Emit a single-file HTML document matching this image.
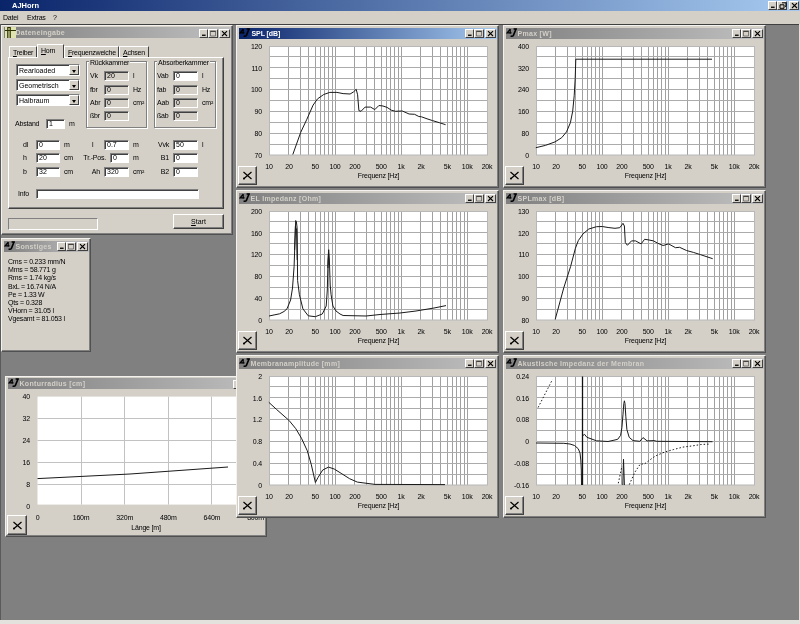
<!DOCTYPE html><html><head><meta charset="utf-8"><style>
*{box-sizing:border-box}
html,body{margin:0;padding:0}
body{width:800px;height:624px;overflow:hidden;background:#808080;position:relative;will-change:transform;font-family:"Liberation Sans",sans-serif;font-size:7px;color:#000}
div,span,svg{position:absolute}
.apptb{left:0;top:0;width:800px;height:11px;background:linear-gradient(90deg,#0a246a,#a6caf0)}
.apptb .t{left:12px;top:1px;color:#fff;font-weight:bold;font-size:7.5px;line-height:9px}
.menu{left:0;top:11px;width:800px;height:13px;background:#d4d0c8}
.menu span{top:2px;line-height:9px;font-size:7px;letter-spacing:-0.2px}
.mdi{left:0;top:24px;width:800px;height:1px;background:#404040}
.win{background:#d4d0c8;border-top:1px solid #f4f2ee;border-left:1px solid #f4f2ee;border-right:1px solid #505050;border-bottom:1px solid #505050;box-shadow:inset -1px -1px 0 #808080}
.tb{left:1.5px;top:2px;height:11px;background:linear-gradient(90deg,#808080,#c0c0c0)}
.tb.act{background:linear-gradient(90deg,#0a246a,#a6caf0)}
.tb .tt{left:12px;top:1px;line-height:9px;font-weight:bold;font-size:7px;color:#d4d0c8;white-space:nowrap;letter-spacing:0.3px}
.tb.act .tt{color:#fff;letter-spacing:-0.1px;left:13px}
.ic{left:1px;top:1px;width:10px;height:9px}

.tbtn{top:3px;width:9px;height:9px;background:#d4d0c8;border-top:1px solid #fff;border-left:1px solid #fff;border-right:1px solid #404040;border-bottom:1px solid #404040}
.tbtn i{position:absolute;display:block}
.tbtn .mn{left:2px;top:4px;width:4px;height:1px;background:#000}
.tbtn .mx{left:1px;top:0px;width:6px;height:5px;border:1px solid #000;border-top-width:1px}
.tbtn .cl{left:1px;top:-1px;font-style:normal;font-size:7px;line-height:7px;font-weight:bold}
.sv{left:-1px;top:-1px}
.lb{font-size:7px;letter-spacing:-0.2px;fill:#000;font-family:"Liberation Sans",sans-serif}
.xbtn{width:19px;height:19px;background:#d4d0c8;border-top:1px solid #fff;border-left:1px solid #fff;border-right:1px solid #404040;border-bottom:1px solid #404040;box-shadow:inset -1px -1px 0 #808080}
.xbtn span{left:4px;top:3px;font-size:10px;line-height:10px;font-weight:bold}

.tx{line-height:9px;font-size:7px;letter-spacing:-0.2px;white-space:nowrap}
.fld{border-top:1px solid #808080;border-left:1px solid #808080;border-right:1px solid #fff;border-bottom:1px solid #fff;box-shadow:inset 1px 1px 0 #404040}
.fld span{left:2px;top:0;line-height:8px;font-size:7px}
.tabpage{border-top:1px solid #fff;border-left:1px solid #fff;border-right:1px solid #404040;border-bottom:1px solid #404040;box-shadow:inset -1px -1px 0 #808080}
.tab{background:#d4d0c8;border-top:1px solid #fff;border-left:1px solid #fff;border-right:1px solid #404040}
.tab.sel{z-index:2;border-bottom:none}
.tab span{left:3px;top:0.5px;line-height:9px;font-size:7px;letter-spacing:-0.25px;white-space:nowrap}
.combo{background:#fff;border-top:1px solid #808080;border-left:1px solid #808080;border-right:1px solid #fff;border-bottom:1px solid #fff;box-shadow:inset 1px 1px 0 #404040}
.combo span{left:2px;top:1px;line-height:9px;font-size:7px}
.cbtn{right:0px;top:0px;width:10px;height:10px;background:#d4d0c8;border-top:1px solid #fff;border-left:1px solid #fff;border-right:1px solid #404040;border-bottom:1px solid #404040}
.cbtn i{position:absolute;left:2px;top:3.5px;width:0;height:0;border-left:2.5px solid transparent;border-right:2.5px solid transparent;border-top:3px solid #000}
.grp{border:1px solid #808080;box-shadow:1px 1px 0 #fff, inset 1px 1px 0 #fff}
.prog{border-top:1px solid #808080;border-left:1px solid #808080;border-right:1px solid #fff;border-bottom:1px solid #fff}
.btn{background:#d4d0c8;border-top:1px solid #fff;border-left:1px solid #fff;border-right:1px solid #404040;border-bottom:1px solid #404040;box-shadow:inset -1px -1px 0 #808080}
.btn span{left:0;width:100%;text-align:center;top:2px;line-height:9px;font-size:7px}

</style></head><body>
<div class="apptb"><span class="t">AJHorn</span></div>
<div class="menu"><span style="left:3px">Datei</span><span style="left:27px">Extras</span><span style="left:53px">?</span></div>
<div class="mdi"></div>
<div style="left:0;top:24px;width:1px;height:596px;background:#5a5a5a"></div>
<div class="tbtn" style="left:768px;top:1px;width:9px;height:9px"><svg style="left:0px;top:0px" width="8" height="7" viewBox="0 0 8 7"><rect x="2" y="4.6" width="3.6" height="1.3" fill="#000"/></svg></div>
<div class="tbtn" style="left:777px;top:1px;width:10px;height:9px"><svg style="left:1px;top:0px" width="8" height="7" viewBox="0 0 8 7"><path d="M3 0.8H7V4.3H6M1 2.8H5V6.3H1Z" stroke="#000" stroke-width="1" fill="none"/></svg></div>
<div class="tbtn" style="left:789px;top:1px;width:10px;height:9px"><svg style="left:0px;top:0px" width="9" height="7" viewBox="0 0 9 7"><path d="M2 1.2L7 6M7 1.2L2 6" stroke="#000" stroke-width="1.1" fill="none"/></svg></div>
<div style="left:0;top:620px;width:800px;height:4px;background:#e4e2dc"></div>
<div style="left:799px;top:24px;width:1px;height:600px;background:#e4e2dc"></div>
<div class="win" style="left:1px;top:25px;width:232px;height:210px;">
<div class="tb" style="width:227px;top:1px"><span class="ic ic-grid"><svg style="left:-1px;top:-1px" width="13" height="11" viewBox="0 0 13 11"><rect x="1" y="0" width="11" height="11" fill="#dfe3b0"/><path d="M1 3.5H12M3.5 0.5H6.8M3.8 0V11M6.2 0V11" stroke="#2a3000" stroke-width="1.2" fill="none"/></svg></span><span class="tt">Dateneingabe</span></div>
<div class="tbtn" style="left:197px;width:9px"><svg style="left:0px;top:0px" width="8" height="7" viewBox="0 0 8 7"><rect x="2" y="4.6" width="3.6" height="1.3" fill="#000"/></svg></div>
<div class="tbtn" style="left:206px;width:10px"><svg style="left:0px;top:0px" width="8" height="7" viewBox="0 0 8 7"><path d="M1.5 1.5H6.5V6H1.5Z" stroke="#555" stroke-width="0.7" fill="none"/><path d="M1.2 1.2H6.8" stroke="#222" stroke-width="0.9"/></svg></div>
<div class="tbtn" style="left:217px;width:11px"><svg style="left:0px;top:0px" width="9" height="7" viewBox="0 0 9 7"><path d="M2 1.2L7 6M7 1.2L2 6" stroke="#000" stroke-width="1.1" fill="none"/></svg></div>
<div class="tabpage" style="left:6px;top:31px;width:216px;height:152px"></div>
<div class="tab" style="left:7px;top:20px;width:28px;height:11px"><span><u>T</u>reiber</span></div>
<div class="tab sel" style="left:35px;top:18px;width:27px;height:14px"><span><u>H</u>orn</span></div>
<div class="tab" style="left:62px;top:20px;width:55px;height:11px"><span><u>F</u>requenzweiche</span></div>
<div class="tab" style="left:117px;top:20px;width:30px;height:11px"><span><u>A</u>chsen</span></div>
<div class="combo" style="left:14px;top:38px;width:64px;height:12px"><span>Rearloaded</span><div class="cbtn"><i></i></div></div>
<div class="combo" style="left:14px;top:53px;width:64px;height:12px"><span>Geometrisch</span><div class="cbtn"><i></i></div></div>
<div class="combo" style="left:14px;top:68px;width:64px;height:12px"><span>Halbraum</span><div class="cbtn"><i></i></div></div>
<div class="grp" style="left:84px;top:35px;width:61px;height:67px"></div>
<span class="tx" style="left:87px;top:32px;background:#d4d0c8;padding:0 1px">R&uuml;ckkammer</span>
<div class="grp" style="left:152px;top:35px;width:62px;height:67px"></div>
<span class="tx" style="left:155px;top:32px;background:#d4d0c8;padding:0 1px">Absorberkammer</span>
<span class="tx" style="left:88px;top:45px;">Vk</span>
<div class="fld" style="left:102px;top:45px;width:25px;height:10px;background:#d4d0c8"><span>20</span></div>
<span class="tx" style="left:131px;top:45px;">l</span>
<span class="tx" style="left:88px;top:59px;">fbr</span>
<div class="fld" style="left:102px;top:59px;width:25px;height:10px;background:#d4d0c8"><span>0</span></div>
<span class="tx" style="left:131px;top:59px;">Hz</span>
<span class="tx" style="left:88px;top:72px;">Abr</span>
<div class="fld" style="left:102px;top:72px;width:25px;height:10px;background:#d4d0c8"><span>0</span></div>
<span class="tx" style="left:131px;top:72px;">cm&sup2;</span>
<span class="tx" style="left:88px;top:85px;">&szlig;br</span>
<div class="fld" style="left:102px;top:85px;width:25px;height:10px;background:#d4d0c8"><span>0</span></div>
<span class="tx" style="left:131px;top:85px;"></span>
<span class="tx" style="left:155px;top:45px;">Vab</span>
<div class="fld" style="left:171px;top:45px;width:25px;height:10px;background:#fff"><span>0</span></div>
<span class="tx" style="left:200px;top:45px;">l</span>
<span class="tx" style="left:155px;top:59px;">fab</span>
<div class="fld" style="left:171px;top:59px;width:25px;height:10px;background:#d4d0c8"><span>0</span></div>
<span class="tx" style="left:200px;top:59px;">Hz</span>
<span class="tx" style="left:155px;top:72px;">Aab</span>
<div class="fld" style="left:171px;top:72px;width:25px;height:10px;background:#d4d0c8"><span>0</span></div>
<span class="tx" style="left:200px;top:72px;">cm&sup2;</span>
<span class="tx" style="left:155px;top:85px;">&szlig;ab</span>
<div class="fld" style="left:171px;top:85px;width:25px;height:10px;background:#d4d0c8"><span>0</span></div>
<span class="tx" style="left:200px;top:85px;"></span>
<span class="tx" style="left:13px;top:93px;">Abstand</span>
<div class="fld" style="left:44px;top:93px;width:19px;height:10px;background:#fff"><span>1</span></div>
<span class="tx" style="left:67px;top:93px;">m</span>
<span class="tx" style="left:21px;top:114px;">dl</span>
<div class="fld" style="left:34px;top:114px;width:24px;height:10px;background:#fff"><span>0</span></div>
<span class="tx" style="left:62px;top:114px;">m</span>
<span class="tx" style="left:90px;top:114px;">l</span>
<div class="fld" style="left:102px;top:114px;width:25px;height:10px;background:#fff"><span>0.7</span></div>
<span class="tx" style="left:131px;top:114px;">m</span>
<span class="tx" style="right:63px;top:114px">Vvk</span>
<div class="fld" style="left:171px;top:114px;width:25px;height:10px;background:#fff"><span>50</span></div>
<span class="tx" style="left:200px;top:114px;">l</span>
<span class="tx" style="left:21px;top:127px;">h</span>
<div class="fld" style="left:34px;top:127px;width:24px;height:10px;background:#fff"><span>20</span></div>
<span class="tx" style="left:62px;top:127px;">cm</span>
<span class="tx" style="right:126px;top:127px">Tr.-Pos.</span>
<div class="fld" style="left:108px;top:127px;width:19px;height:10px;background:#fff"><span>0</span></div>
<span class="tx" style="left:131px;top:127px;">m</span>
<span class="tx" style="right:63px;top:127px">B1</span>
<div class="fld" style="left:171px;top:127px;width:25px;height:10px;background:#fff"><span>0</span></div>
<span class="tx" style="left:200px;top:127px;"></span>
<span class="tx" style="left:21px;top:141px;">b</span>
<div class="fld" style="left:34px;top:141px;width:24px;height:10px;background:#fff"><span>32</span></div>
<span class="tx" style="left:62px;top:141px;">cm</span>
<span class="tx" style="right:132px;top:141px">Ah</span>
<div class="fld" style="left:102px;top:141px;width:25px;height:10px;background:#fff"><span>320</span></div>
<span class="tx" style="left:131px;top:141px;">cm&sup2;</span>
<span class="tx" style="right:63px;top:141px">B2</span>
<div class="fld" style="left:171px;top:141px;width:25px;height:10px;background:#fff"><span>0</span></div>
<span class="tx" style="left:200px;top:141px;"></span>
<span class="tx" style="left:16px;top:163px;">Info</span>
<div class="fld" style="left:34px;top:163px;width:163px;height:10px;background:#fff"><span></span></div>
<div class="prog" style="left:6px;top:192px;width:90px;height:12px"></div>
<div class="btn" style="left:171px;top:188px;width:51px;height:15px"><span><u>S</u>tart</span></div>
</div>
<div class="win" style="left:1px;top:238px;width:90px;height:114px;">
<div class="tb" style="width:85px;top:2px"><span class="ic ic-aj"><svg style="left:-1px;top:-1px" width="12" height="11" viewBox="0 0 12 11"><path d="M4.2 1V5.8M4.2 1.2L1.2 4.8H5.5" stroke="#000" stroke-width="1.2" fill="none"/><path d="M7.6 1H10.9M10 1L7.4 7.4Q6.8 8.6 4.6 8.1" stroke="#000" stroke-width="1.6" fill="none"/></svg></span><span class="tt">Sonstiges</span></div>
<div class="tbtn" style="left:55px;width:9px"><svg style="left:0px;top:0px" width="8" height="7" viewBox="0 0 8 7"><rect x="2" y="4.6" width="3.6" height="1.3" fill="#000"/></svg></div>
<div class="tbtn" style="left:64px;width:10px"><svg style="left:0px;top:0px" width="8" height="7" viewBox="0 0 8 7"><path d="M1.5 1.5H6.5V6H1.5Z" stroke="#555" stroke-width="0.7" fill="none"/><path d="M1.2 1.2H6.8" stroke="#222" stroke-width="0.9"/></svg></div>
<div class="tbtn" style="left:75px;width:11px"><svg style="left:0px;top:0px" width="9" height="7" viewBox="0 0 9 7"><path d="M2 1.2L7 6M7 1.2L2 6" stroke="#000" stroke-width="1.1" fill="none"/></svg></div>
<span class="tx" style="left:6px;top:18.0px">Cms = 0.233 mm/N</span>
<span class="tx" style="left:6px;top:26.1px">Mms = 58.771 g</span>
<span class="tx" style="left:6px;top:34.3px">Rms = 1.74 kg/s</span>
<span class="tx" style="left:6px;top:42.5px">BxL = 16.74 N/A</span>
<span class="tx" style="left:6px;top:50.6px">Pe = 1.33 W</span>
<span class="tx" style="left:6px;top:58.8px">Qts = 0.328</span>
<span class="tx" style="left:6px;top:66.9px">VHorn = 31.05 l</span>
<span class="tx" style="left:6px;top:75.1px">Vgesamt = 81.053 l</span>
</div>
<div class="win" style="left:5px;top:376px;width:262px;height:161px;">
<div class="tb" style="width:257px;top:1px"><span class="ic ic-aj"><svg style="left:-1px;top:-1px" width="12" height="11" viewBox="0 0 12 11"><path d="M4.2 1V5.8M4.2 1.2L1.2 4.8H5.5" stroke="#000" stroke-width="1.2" fill="none"/><path d="M7.6 1H10.9M10 1L7.4 7.4Q6.8 8.6 4.6 8.1" stroke="#000" stroke-width="1.6" fill="none"/></svg></span><span class="tt">Konturradius [cm]</span></div>
<div class="tbtn" style="left:227px;width:9px"><svg style="left:0px;top:0px" width="8" height="7" viewBox="0 0 8 7"><rect x="2" y="4.6" width="3.6" height="1.3" fill="#000"/></svg></div>
<div class="tbtn" style="left:236px;width:10px"><svg style="left:0px;top:0px" width="8" height="7" viewBox="0 0 8 7"><path d="M1.5 1.5H6.5V6H1.5Z" stroke="#555" stroke-width="0.7" fill="none"/><path d="M1.2 1.2H6.8" stroke="#222" stroke-width="0.9"/></svg></div>
<div class="tbtn" style="left:247px;width:11px"><svg style="left:0px;top:0px" width="9" height="7" viewBox="0 0 9 7"><path d="M2 1.2L7 6M7 1.2L2 6" stroke="#000" stroke-width="1.1" fill="none"/></svg></div>
<svg class="sv" width="262" height="161" viewBox="5 376 262 161">
<rect x="37.5" y="396.6" width="218" height="108" fill="#fff"/>
<path d="M81.5 396.6V504.6M37.5 418.5H255.5M124.5 396.6V504.6M37.5 440.5H255.5M168.5 396.6V504.6M37.5 462.5H255.5M211.5 396.6V504.6M37.5 484.5H255.5" stroke="#c2c2c2" stroke-width="1" fill="none"/>
<polyline fill="none" stroke="#1a1a1a" stroke-width="1" stroke-linejoin="round" points="37.5,478.6 130,474 228,467" />
<text x="30" y="399.2" text-anchor="end" class="lb">40</text>
<text x="30" y="421.1" text-anchor="end" class="lb">32</text>
<text x="30" y="443.0" text-anchor="end" class="lb">24</text>
<text x="30" y="464.9" text-anchor="end" class="lb">16</text>
<text x="30" y="486.8" text-anchor="end" class="lb">8</text>
<text x="30" y="508.7" text-anchor="end" class="lb">0</text>
<text x="37.5" y="520.2" text-anchor="middle" class="lb">0</text>
<text x="81.1" y="520.2" text-anchor="middle" class="lb">160m</text>
<text x="124.7" y="520.2" text-anchor="middle" class="lb">320m</text>
<text x="168.3" y="520.2" text-anchor="middle" class="lb">480m</text>
<text x="211.9" y="520.2" text-anchor="middle" class="lb">640m</text>
<text x="255.5" y="520.2" text-anchor="middle" class="lb">800m</text>
<text x="146" y="529.8" text-anchor="middle" class="lb">L&auml;nge [m]</text>
</svg>
<div class="xbtn" style="left:1px;top:138px;width:20px;height:20px"><svg style="left:4px;top:4.5px" width="11" height="9" viewBox="0 0 11 9"><path d="M1.5 1L9.5 8M9.5 1L1.5 8" stroke="#000" stroke-width="1.2" fill="none"/><circle cx="2" cy="7.6" r="1" fill="#000"/></svg></div>
</div>
<div class="win" style="left:236px;top:25px;width:263px;height:163px;">
<div class="tb act" style="width:258px;top:2px"><span class="ic ic-aj"><svg style="left:-1px;top:-1px" width="12" height="11" viewBox="0 0 12 11"><path d="M4.2 1V5.8M4.2 1.2L1.2 4.8H5.5" stroke="#000" stroke-width="1.2" fill="none"/><path d="M7.6 1H10.9M10 1L7.4 7.4Q6.8 8.6 4.6 8.1" stroke="#000" stroke-width="1.6" fill="none"/></svg></span><span class="tt">SPL [dB]</span></div>
<div class="tbtn" style="left:228px;width:9px"><svg style="left:0px;top:0px" width="8" height="7" viewBox="0 0 8 7"><rect x="2" y="4.6" width="3.6" height="1.3" fill="#000"/></svg></div>
<div class="tbtn" style="left:237px;width:10px"><svg style="left:0px;top:0px" width="8" height="7" viewBox="0 0 8 7"><path d="M1.5 1.5H6.5V6H1.5Z" stroke="#555" stroke-width="0.7" fill="none"/><path d="M1.2 1.2H6.8" stroke="#222" stroke-width="0.9"/></svg></div>
<div class="tbtn" style="left:248px;width:11px"><svg style="left:0px;top:0px" width="9" height="7" viewBox="0 0 9 7"><path d="M2 1.2L7 6M7 1.2L2 6" stroke="#000" stroke-width="1.1" fill="none"/></svg></div>
<svg class="sv" width="263" height="163" viewBox="236 25 263 163">
<rect x="269" y="46" width="219" height="109" fill="#fff"/>
<path d="M288.5 46V155M300.5 46V155M308.5 46V155M315.5 46V155M320.5 46V155M324.5 46V155M328.5 46V155M332.5 46V155M335.5 46V155M354.5 46V155M366.5 46V155M374.5 46V155M381.5 46V155M386.5 46V155M390.5 46V155M394.5 46V155M398.5 46V155M401.5 46V155M420.5 46V155M432.5 46V155M440.5 46V155M447.5 46V155M452.5 46V155M456.5 46V155M460.5 46V155M464.5 46V155M467.5 46V155" stroke="#a0a0a0" stroke-width="1" fill="none"/>
<path d="M269 56.5H487M269 67.5H487M269 78.5H487M269 89.5H487M269 100.5H487M269 111.5H487M269 122.5H487M269 133.5H487M269 144.5H487" stroke="#ababab" stroke-width="1" fill="none"/>
<rect x="269.5" y="46.5" width="218" height="108.5" fill="none" stroke="#b8b8b8" stroke-width="1"/>
<polyline fill="none" stroke="#1a1a1a" stroke-width="1" stroke-linejoin="round" points="292.8,154.5 300.7,132.4 306.9,119.2 313.1,105.1 317.5,98.9 323.7,94.5 329.8,92.4 336.9,92.4 343.1,93.6 350.1,94 353.4,92 356.2,89.3 357.6,94.8 358.9,110.6 361,111.3 365.1,107.1 370.6,107.1 374.8,109.6 378.9,105.5 383,106 387.1,107.4 391.3,110.2 395.4,111.3 402.3,111 409.1,114 414.6,114.3 418.8,116.5 421.5,116.8 427,118.8 432.5,120.6 439.4,122.7 445.6,124.7" />
<text x="262" y="48.6" text-anchor="end" class="lb">120</text>
<text x="262" y="70.5" text-anchor="end" class="lb">110</text>
<text x="262" y="92.4" text-anchor="end" class="lb">100</text>
<text x="262" y="114.3" text-anchor="end" class="lb">90</text>
<text x="262" y="136.2" text-anchor="end" class="lb">80</text>
<text x="262" y="158.1" text-anchor="end" class="lb">70</text>
<text x="269.0" y="168.8" text-anchor="middle" class="lb">10</text>
<text x="288.9" y="168.8" text-anchor="middle" class="lb">20</text>
<text x="315.2" y="168.8" text-anchor="middle" class="lb">50</text>
<text x="335.0" y="168.8" text-anchor="middle" class="lb">100</text>
<text x="354.9" y="168.8" text-anchor="middle" class="lb">200</text>
<text x="381.2" y="168.8" text-anchor="middle" class="lb">500</text>
<text x="401.1" y="168.8" text-anchor="middle" class="lb">1k</text>
<text x="421.0" y="168.8" text-anchor="middle" class="lb">2k</text>
<text x="447.2" y="168.8" text-anchor="middle" class="lb">5k</text>
<text x="467.1" y="168.8" text-anchor="middle" class="lb">10k</text>
<text x="487.0" y="168.8" text-anchor="middle" class="lb">20k</text>
<text x="378.5" y="177.8" text-anchor="middle" class="lb">Frequenz [Hz]</text>
</svg>
<div class="xbtn" style="left:1px;top:140px"><svg style="left:3px;top:4px" width="11" height="9" viewBox="0 0 11 9"><path d="M1.5 1L9.5 8M9.5 1L1.5 8" stroke="#000" stroke-width="1.2" fill="none"/><circle cx="2" cy="7.6" r="1" fill="#000"/></svg></div>
</div>
<div class="win" style="left:503px;top:25px;width:263px;height:163px;">
<div class="tb" style="width:258px;top:2px"><span class="ic ic-aj"><svg style="left:-1px;top:-1px" width="12" height="11" viewBox="0 0 12 11"><path d="M4.2 1V5.8M4.2 1.2L1.2 4.8H5.5" stroke="#000" stroke-width="1.2" fill="none"/><path d="M7.6 1H10.9M10 1L7.4 7.4Q6.8 8.6 4.6 8.1" stroke="#000" stroke-width="1.6" fill="none"/></svg></span><span class="tt">Pmax [W]</span></div>
<div class="tbtn" style="left:228px;width:9px"><svg style="left:0px;top:0px" width="8" height="7" viewBox="0 0 8 7"><rect x="2" y="4.6" width="3.6" height="1.3" fill="#000"/></svg></div>
<div class="tbtn" style="left:237px;width:10px"><svg style="left:0px;top:0px" width="8" height="7" viewBox="0 0 8 7"><path d="M1.5 1.5H6.5V6H1.5Z" stroke="#555" stroke-width="0.7" fill="none"/><path d="M1.2 1.2H6.8" stroke="#222" stroke-width="0.9"/></svg></div>
<div class="tbtn" style="left:248px;width:11px"><svg style="left:0px;top:0px" width="9" height="7" viewBox="0 0 9 7"><path d="M2 1.2L7 6M7 1.2L2 6" stroke="#000" stroke-width="1.1" fill="none"/></svg></div>
<svg class="sv" width="263" height="163" viewBox="503 25 263 163">
<rect x="536" y="46" width="219" height="109" fill="#fff"/>
<path d="M555.5 46V155M567.5 46V155M575.5 46V155M582.5 46V155M587.5 46V155M591.5 46V155M595.5 46V155M599.5 46V155M602.5 46V155M621.5 46V155M633.5 46V155M641.5 46V155M648.5 46V155M653.5 46V155M657.5 46V155M661.5 46V155M665.5 46V155M668.5 46V155M687.5 46V155M699.5 46V155M707.5 46V155M714.5 46V155M719.5 46V155M723.5 46V155M727.5 46V155M731.5 46V155M734.5 46V155" stroke="#a0a0a0" stroke-width="1" fill="none"/>
<path d="M536 56.5H754M536 67.5H754M536 78.5H754M536 89.5H754M536 100.5H754M536 111.5H754M536 122.5H754M536 133.5H754M536 144.5H754" stroke="#ababab" stroke-width="1" fill="none"/>
<rect x="536.5" y="46.5" width="218" height="108.5" fill="none" stroke="#b8b8b8" stroke-width="1"/>
<polyline fill="none" stroke="#1a1a1a" stroke-width="1" stroke-linejoin="round" points="535.8,147.7 545.4,145.4 555,141.9 561.7,137.7 566.5,131.9 570.4,122.7 572.7,111.2 574.2,95.8 575.2,78.5 575.8,59.2 712,59.2" />
<text x="529" y="48.6" text-anchor="end" class="lb">400</text>
<text x="529" y="70.5" text-anchor="end" class="lb">320</text>
<text x="529" y="92.4" text-anchor="end" class="lb">240</text>
<text x="529" y="114.3" text-anchor="end" class="lb">160</text>
<text x="529" y="136.2" text-anchor="end" class="lb">80</text>
<text x="529" y="158.1" text-anchor="end" class="lb">0</text>
<text x="536.0" y="168.8" text-anchor="middle" class="lb">10</text>
<text x="555.9" y="168.8" text-anchor="middle" class="lb">20</text>
<text x="582.2" y="168.8" text-anchor="middle" class="lb">50</text>
<text x="602.0" y="168.8" text-anchor="middle" class="lb">100</text>
<text x="621.9" y="168.8" text-anchor="middle" class="lb">200</text>
<text x="648.2" y="168.8" text-anchor="middle" class="lb">500</text>
<text x="668.1" y="168.8" text-anchor="middle" class="lb">1k</text>
<text x="688.0" y="168.8" text-anchor="middle" class="lb">2k</text>
<text x="714.2" y="168.8" text-anchor="middle" class="lb">5k</text>
<text x="734.1" y="168.8" text-anchor="middle" class="lb">10k</text>
<text x="754.0" y="168.8" text-anchor="middle" class="lb">20k</text>
<text x="645.5" y="177.8" text-anchor="middle" class="lb">Frequenz [Hz]</text>
</svg>
<div class="xbtn" style="left:1px;top:140px"><svg style="left:3px;top:4px" width="11" height="9" viewBox="0 0 11 9"><path d="M1.5 1L9.5 8M9.5 1L1.5 8" stroke="#000" stroke-width="1.2" fill="none"/><circle cx="2" cy="7.6" r="1" fill="#000"/></svg></div>
</div>
<div class="win" style="left:236px;top:190px;width:263px;height:163px;">
<div class="tb" style="width:258px;top:2px"><span class="ic ic-aj"><svg style="left:-1px;top:-1px" width="12" height="11" viewBox="0 0 12 11"><path d="M4.2 1V5.8M4.2 1.2L1.2 4.8H5.5" stroke="#000" stroke-width="1.2" fill="none"/><path d="M7.6 1H10.9M10 1L7.4 7.4Q6.8 8.6 4.6 8.1" stroke="#000" stroke-width="1.6" fill="none"/></svg></span><span class="tt">EL Impedanz [Ohm]</span></div>
<div class="tbtn" style="left:228px;width:9px"><svg style="left:0px;top:0px" width="8" height="7" viewBox="0 0 8 7"><rect x="2" y="4.6" width="3.6" height="1.3" fill="#000"/></svg></div>
<div class="tbtn" style="left:237px;width:10px"><svg style="left:0px;top:0px" width="8" height="7" viewBox="0 0 8 7"><path d="M1.5 1.5H6.5V6H1.5Z" stroke="#555" stroke-width="0.7" fill="none"/><path d="M1.2 1.2H6.8" stroke="#222" stroke-width="0.9"/></svg></div>
<div class="tbtn" style="left:248px;width:11px"><svg style="left:0px;top:0px" width="9" height="7" viewBox="0 0 9 7"><path d="M2 1.2L7 6M7 1.2L2 6" stroke="#000" stroke-width="1.1" fill="none"/></svg></div>
<svg class="sv" width="263" height="163" viewBox="236 190 263 163">
<rect x="269" y="211" width="219" height="109" fill="#fff"/>
<path d="M288.5 211V320M300.5 211V320M308.5 211V320M315.5 211V320M320.5 211V320M324.5 211V320M328.5 211V320M332.5 211V320M335.5 211V320M354.5 211V320M366.5 211V320M374.5 211V320M381.5 211V320M386.5 211V320M390.5 211V320M394.5 211V320M398.5 211V320M401.5 211V320M420.5 211V320M432.5 211V320M440.5 211V320M447.5 211V320M452.5 211V320M456.5 211V320M460.5 211V320M464.5 211V320M467.5 211V320" stroke="#a0a0a0" stroke-width="1" fill="none"/>
<path d="M269 221.5H487M269 232.5H487M269 243.5H487M269 254.5H487M269 265.5H487M269 276.5H487M269 287.5H487M269 298.5H487M269 309.5H487" stroke="#ababab" stroke-width="1" fill="none"/>
<rect x="269.5" y="211.5" width="218" height="108.5" fill="none" stroke="#b8b8b8" stroke-width="1"/>
<polyline fill="none" stroke="#1a1a1a" stroke-width="1" stroke-linejoin="round" points="269,316 279.6,313.8 284,311.5 287,308.8 290.6,300 292.5,288 294.1,266.4 295.2,235 295.7,220.5 296.4,222 297.1,227.6 297.6,280.5 299.4,294.7 302.9,308.8 308.2,315.8 315.3,316.7 322.3,314 326.2,306 327.3,290 328,261 328.7,249.7 329.4,261 330.2,285 331.1,294.7 332.9,306 336,311 340,314 343.1,315.5 366,316 380,314.5 400,313 416,311 434,308 446,305.6" />
<polyline fill="none" stroke="#1a1a1a" stroke-width="1" stroke-linejoin="round" points="294.6,250 295.4,226 296.6,230 297.2,260" />
<polyline fill="none" stroke="#1a1a1a" stroke-width="1" stroke-linejoin="round" points="327.9,268 328.5,252 329.1,265" />
<text x="262" y="213.6" text-anchor="end" class="lb">200</text>
<text x="262" y="235.5" text-anchor="end" class="lb">160</text>
<text x="262" y="257.4" text-anchor="end" class="lb">120</text>
<text x="262" y="279.3" text-anchor="end" class="lb">80</text>
<text x="262" y="301.2" text-anchor="end" class="lb">40</text>
<text x="262" y="323.1" text-anchor="end" class="lb">0</text>
<text x="269.0" y="333.8" text-anchor="middle" class="lb">10</text>
<text x="288.9" y="333.8" text-anchor="middle" class="lb">20</text>
<text x="315.2" y="333.8" text-anchor="middle" class="lb">50</text>
<text x="335.0" y="333.8" text-anchor="middle" class="lb">100</text>
<text x="354.9" y="333.8" text-anchor="middle" class="lb">200</text>
<text x="381.2" y="333.8" text-anchor="middle" class="lb">500</text>
<text x="401.1" y="333.8" text-anchor="middle" class="lb">1k</text>
<text x="421.0" y="333.8" text-anchor="middle" class="lb">2k</text>
<text x="447.2" y="333.8" text-anchor="middle" class="lb">5k</text>
<text x="467.1" y="333.8" text-anchor="middle" class="lb">10k</text>
<text x="487.0" y="333.8" text-anchor="middle" class="lb">20k</text>
<text x="378.5" y="342.8" text-anchor="middle" class="lb">Frequenz [Hz]</text>
</svg>
<div class="xbtn" style="left:1px;top:140px"><svg style="left:3px;top:4px" width="11" height="9" viewBox="0 0 11 9"><path d="M1.5 1L9.5 8M9.5 1L1.5 8" stroke="#000" stroke-width="1.2" fill="none"/><circle cx="2" cy="7.6" r="1" fill="#000"/></svg></div>
</div>
<div class="win" style="left:503px;top:190px;width:263px;height:163px;">
<div class="tb" style="width:258px;top:2px"><span class="ic ic-aj"><svg style="left:-1px;top:-1px" width="12" height="11" viewBox="0 0 12 11"><path d="M4.2 1V5.8M4.2 1.2L1.2 4.8H5.5" stroke="#000" stroke-width="1.2" fill="none"/><path d="M7.6 1H10.9M10 1L7.4 7.4Q6.8 8.6 4.6 8.1" stroke="#000" stroke-width="1.6" fill="none"/></svg></span><span class="tt">SPLmax [dB]</span></div>
<div class="tbtn" style="left:228px;width:9px"><svg style="left:0px;top:0px" width="8" height="7" viewBox="0 0 8 7"><rect x="2" y="4.6" width="3.6" height="1.3" fill="#000"/></svg></div>
<div class="tbtn" style="left:237px;width:10px"><svg style="left:0px;top:0px" width="8" height="7" viewBox="0 0 8 7"><path d="M1.5 1.5H6.5V6H1.5Z" stroke="#555" stroke-width="0.7" fill="none"/><path d="M1.2 1.2H6.8" stroke="#222" stroke-width="0.9"/></svg></div>
<div class="tbtn" style="left:248px;width:11px"><svg style="left:0px;top:0px" width="9" height="7" viewBox="0 0 9 7"><path d="M2 1.2L7 6M7 1.2L2 6" stroke="#000" stroke-width="1.1" fill="none"/></svg></div>
<svg class="sv" width="263" height="163" viewBox="503 190 263 163">
<rect x="536" y="211" width="219" height="109" fill="#fff"/>
<path d="M555.5 211V320M567.5 211V320M575.5 211V320M582.5 211V320M587.5 211V320M591.5 211V320M595.5 211V320M599.5 211V320M602.5 211V320M621.5 211V320M633.5 211V320M641.5 211V320M648.5 211V320M653.5 211V320M657.5 211V320M661.5 211V320M665.5 211V320M668.5 211V320M687.5 211V320M699.5 211V320M707.5 211V320M714.5 211V320M719.5 211V320M723.5 211V320M727.5 211V320M731.5 211V320M734.5 211V320" stroke="#a0a0a0" stroke-width="1" fill="none"/>
<path d="M536 221.5H754M536 232.5H754M536 243.5H754M536 254.5H754M536 265.5H754M536 276.5H754M536 287.5H754M536 298.5H754M536 309.5H754" stroke="#ababab" stroke-width="1" fill="none"/>
<rect x="536.5" y="211.5" width="218" height="108.5" fill="none" stroke="#b8b8b8" stroke-width="1"/>
<polyline fill="none" stroke="#1a1a1a" stroke-width="1" stroke-linejoin="round" points="555.2,319.4 563.8,287.7 570.6,266.5 575.4,248.3 578.3,240.6 583.1,233.8 588.8,229 596.5,226.7 602.3,226.5 608.1,227.5 615,228.3 619.8,227.7 623,223.3 624.4,226 625.3,242.5 627.4,245.3 631.5,240.9 635.6,240.9 641.1,243.9 644.6,239.3 648,239.8 653.5,240.9 657.6,243.2 663.1,245.5 668.6,243.9 675.5,247.7 679.6,247.3 686.5,250.5 693.4,252.4 700.3,254.6 712.7,258.7" />
<text x="529" y="213.6" text-anchor="end" class="lb">130</text>
<text x="529" y="235.5" text-anchor="end" class="lb">120</text>
<text x="529" y="257.4" text-anchor="end" class="lb">110</text>
<text x="529" y="279.3" text-anchor="end" class="lb">100</text>
<text x="529" y="301.2" text-anchor="end" class="lb">90</text>
<text x="529" y="323.1" text-anchor="end" class="lb">80</text>
<text x="536.0" y="333.8" text-anchor="middle" class="lb">10</text>
<text x="555.9" y="333.8" text-anchor="middle" class="lb">20</text>
<text x="582.2" y="333.8" text-anchor="middle" class="lb">50</text>
<text x="602.0" y="333.8" text-anchor="middle" class="lb">100</text>
<text x="621.9" y="333.8" text-anchor="middle" class="lb">200</text>
<text x="648.2" y="333.8" text-anchor="middle" class="lb">500</text>
<text x="668.1" y="333.8" text-anchor="middle" class="lb">1k</text>
<text x="688.0" y="333.8" text-anchor="middle" class="lb">2k</text>
<text x="714.2" y="333.8" text-anchor="middle" class="lb">5k</text>
<text x="734.1" y="333.8" text-anchor="middle" class="lb">10k</text>
<text x="754.0" y="333.8" text-anchor="middle" class="lb">20k</text>
<text x="645.5" y="342.8" text-anchor="middle" class="lb">Frequenz [Hz]</text>
</svg>
<div class="xbtn" style="left:1px;top:140px"><svg style="left:3px;top:4px" width="11" height="9" viewBox="0 0 11 9"><path d="M1.5 1L9.5 8M9.5 1L1.5 8" stroke="#000" stroke-width="1.2" fill="none"/><circle cx="2" cy="7.6" r="1" fill="#000"/></svg></div>
</div>
<div class="win" style="left:236px;top:355px;width:263px;height:163px;">
<div class="tb" style="width:258px;top:2px"><span class="ic ic-aj"><svg style="left:-1px;top:-1px" width="12" height="11" viewBox="0 0 12 11"><path d="M4.2 1V5.8M4.2 1.2L1.2 4.8H5.5" stroke="#000" stroke-width="1.2" fill="none"/><path d="M7.6 1H10.9M10 1L7.4 7.4Q6.8 8.6 4.6 8.1" stroke="#000" stroke-width="1.6" fill="none"/></svg></span><span class="tt">Membranamplitude [mm]</span></div>
<div class="tbtn" style="left:228px;width:9px"><svg style="left:0px;top:0px" width="8" height="7" viewBox="0 0 8 7"><rect x="2" y="4.6" width="3.6" height="1.3" fill="#000"/></svg></div>
<div class="tbtn" style="left:237px;width:10px"><svg style="left:0px;top:0px" width="8" height="7" viewBox="0 0 8 7"><path d="M1.5 1.5H6.5V6H1.5Z" stroke="#555" stroke-width="0.7" fill="none"/><path d="M1.2 1.2H6.8" stroke="#222" stroke-width="0.9"/></svg></div>
<div class="tbtn" style="left:248px;width:11px"><svg style="left:0px;top:0px" width="9" height="7" viewBox="0 0 9 7"><path d="M2 1.2L7 6M7 1.2L2 6" stroke="#000" stroke-width="1.1" fill="none"/></svg></div>
<svg class="sv" width="263" height="163" viewBox="236 355 263 163">
<rect x="269" y="376" width="219" height="109" fill="#fff"/>
<path d="M288.5 376V485M300.5 376V485M308.5 376V485M315.5 376V485M320.5 376V485M324.5 376V485M328.5 376V485M332.5 376V485M335.5 376V485M354.5 376V485M366.5 376V485M374.5 376V485M381.5 376V485M386.5 376V485M390.5 376V485M394.5 376V485M398.5 376V485M401.5 376V485M420.5 376V485M432.5 376V485M440.5 376V485M447.5 376V485M452.5 376V485M456.5 376V485M460.5 376V485M464.5 376V485M467.5 376V485" stroke="#a0a0a0" stroke-width="1" fill="none"/>
<path d="M269 386.5H487M269 397.5H487M269 408.5H487M269 419.5H487M269 430.5H487M269 441.5H487M269 452.5H487M269 463.5H487M269 474.5H487" stroke="#ababab" stroke-width="1" fill="none"/>
<rect x="269.5" y="376.5" width="218" height="108.5" fill="none" stroke="#b8b8b8" stroke-width="1"/>
<polyline fill="none" stroke="#1a1a1a" stroke-width="1" stroke-linejoin="round" points="268.8,402.3 276.5,409.4 289,420.4 295.8,428.7 301.5,438.3 307.3,450.8 311.2,464.2 315.4,482.5 317.9,477.7 322.7,470 328.5,467.1 334.2,469 341.9,473.8 349.6,478.7 357.3,482.1 375,484.4 445,484.6" />
<text x="262" y="378.6" text-anchor="end" class="lb">2</text>
<text x="262" y="400.5" text-anchor="end" class="lb">1.6</text>
<text x="262" y="422.4" text-anchor="end" class="lb">1.2</text>
<text x="262" y="444.3" text-anchor="end" class="lb">0.8</text>
<text x="262" y="466.2" text-anchor="end" class="lb">0.4</text>
<text x="262" y="488.1" text-anchor="end" class="lb">0</text>
<text x="269.0" y="498.8" text-anchor="middle" class="lb">10</text>
<text x="288.9" y="498.8" text-anchor="middle" class="lb">20</text>
<text x="315.2" y="498.8" text-anchor="middle" class="lb">50</text>
<text x="335.0" y="498.8" text-anchor="middle" class="lb">100</text>
<text x="354.9" y="498.8" text-anchor="middle" class="lb">200</text>
<text x="381.2" y="498.8" text-anchor="middle" class="lb">500</text>
<text x="401.1" y="498.8" text-anchor="middle" class="lb">1k</text>
<text x="421.0" y="498.8" text-anchor="middle" class="lb">2k</text>
<text x="447.2" y="498.8" text-anchor="middle" class="lb">5k</text>
<text x="467.1" y="498.8" text-anchor="middle" class="lb">10k</text>
<text x="487.0" y="498.8" text-anchor="middle" class="lb">20k</text>
<text x="378.5" y="507.8" text-anchor="middle" class="lb">Frequenz [Hz]</text>
</svg>
<div class="xbtn" style="left:1px;top:140px"><svg style="left:3px;top:4px" width="11" height="9" viewBox="0 0 11 9"><path d="M1.5 1L9.5 8M9.5 1L1.5 8" stroke="#000" stroke-width="1.2" fill="none"/><circle cx="2" cy="7.6" r="1" fill="#000"/></svg></div>
</div>
<div class="win" style="left:503px;top:355px;width:263px;height:163px;">
<div class="tb" style="width:258px;top:2px"><span class="ic ic-aj"><svg style="left:-1px;top:-1px" width="12" height="11" viewBox="0 0 12 11"><path d="M4.2 1V5.8M4.2 1.2L1.2 4.8H5.5" stroke="#000" stroke-width="1.2" fill="none"/><path d="M7.6 1H10.9M10 1L7.4 7.4Q6.8 8.6 4.6 8.1" stroke="#000" stroke-width="1.6" fill="none"/></svg></span><span class="tt">Akustische Impedanz der Membran</span></div>
<div class="tbtn" style="left:228px;width:9px"><svg style="left:0px;top:0px" width="8" height="7" viewBox="0 0 8 7"><rect x="2" y="4.6" width="3.6" height="1.3" fill="#000"/></svg></div>
<div class="tbtn" style="left:237px;width:10px"><svg style="left:0px;top:0px" width="8" height="7" viewBox="0 0 8 7"><path d="M1.5 1.5H6.5V6H1.5Z" stroke="#555" stroke-width="0.7" fill="none"/><path d="M1.2 1.2H6.8" stroke="#222" stroke-width="0.9"/></svg></div>
<div class="tbtn" style="left:248px;width:11px"><svg style="left:0px;top:0px" width="9" height="7" viewBox="0 0 9 7"><path d="M2 1.2L7 6M7 1.2L2 6" stroke="#000" stroke-width="1.1" fill="none"/></svg></div>
<svg class="sv" width="263" height="163" viewBox="503 355 263 163">
<rect x="536" y="376" width="219" height="109" fill="#fff"/>
<path d="M555.5 376V485M567.5 376V485M575.5 376V485M582.5 376V485M587.5 376V485M591.5 376V485M595.5 376V485M599.5 376V485M602.5 376V485M621.5 376V485M633.5 376V485M641.5 376V485M648.5 376V485M653.5 376V485M657.5 376V485M661.5 376V485M665.5 376V485M668.5 376V485M687.5 376V485M699.5 376V485M707.5 376V485M714.5 376V485M719.5 376V485M723.5 376V485M727.5 376V485M731.5 376V485M734.5 376V485" stroke="#a0a0a0" stroke-width="1" fill="none"/>
<path d="M536 386.5H754M536 397.5H754M536 408.5H754M536 419.5H754M536 430.5H754M536 441.5H754M536 452.5H754M536 463.5H754M536 474.5H754" stroke="#ababab" stroke-width="1" fill="none"/>
<rect x="536.5" y="376.5" width="218" height="108.5" fill="none" stroke="#b8b8b8" stroke-width="1"/>
<polyline fill="none" stroke="#1a1a1a" stroke-width="1" stroke-linejoin="round" points="536,443 563.8,443.3 570,444 574.5,445.5 578.3,448.8 580,453 580.8,460 581.3,470 581.5,485" />
<polyline fill="none" stroke="#1a1a1a" stroke-width="1" stroke-linejoin="round" points="583,435.4 584.6,434.4 586.9,437.3 596.5,440.8 608,441.5 614,440.2 617.7,439.3 620.6,435.4 621.9,427.7 623,414.2 623.8,403.7 624.4,400.8 625,403.7 625.8,416.2 626.9,429.6 629.2,437.3 633,440.6 639.8,441.3 643,437.6 647.1,440.9 654,440.6 656.8,441.3 712.5,441.7" />
<path d="M582.5 376.5V485" stroke="#111" stroke-width="1.3"/>
<polyline fill="none" stroke="#1a1a1a" stroke-width="1" stroke-linejoin="round" points="622.8,485 623.5,459.2 624.4,485" />
<polyline fill="none" stroke="#1a1a1a" stroke-width="1" stroke-linejoin="round" points="538.1,407.5 552.5,379.4" stroke-dasharray="1.5,2"/>
<polyline fill="none" stroke="#1a1a1a" stroke-width="1" stroke-linejoin="round" points="618.3,483.3 622,466" stroke-dasharray="1.5,2"/>
<polyline fill="none" stroke="#1a1a1a" stroke-width="1" stroke-linejoin="round" points="629.3,484.6 634.8,472.3 640.3,464 644.4,464 649.9,459.9 655.4,456 665,451.9 673.3,449.6 682.9,447.1 692.5,445.9 700.8,444.5 709,444.1" stroke-dasharray="1.5,2"/>
<text x="529" y="378.6" text-anchor="end" class="lb">0.24</text>
<text x="529" y="400.5" text-anchor="end" class="lb">0.16</text>
<text x="529" y="422.4" text-anchor="end" class="lb">0.08</text>
<text x="529" y="444.3" text-anchor="end" class="lb">0</text>
<text x="529" y="466.2" text-anchor="end" class="lb">-0.08</text>
<text x="529" y="488.1" text-anchor="end" class="lb">-0.16</text>
<text x="536.0" y="498.8" text-anchor="middle" class="lb">10</text>
<text x="555.9" y="498.8" text-anchor="middle" class="lb">20</text>
<text x="582.2" y="498.8" text-anchor="middle" class="lb">50</text>
<text x="602.0" y="498.8" text-anchor="middle" class="lb">100</text>
<text x="621.9" y="498.8" text-anchor="middle" class="lb">200</text>
<text x="648.2" y="498.8" text-anchor="middle" class="lb">500</text>
<text x="668.1" y="498.8" text-anchor="middle" class="lb">1k</text>
<text x="688.0" y="498.8" text-anchor="middle" class="lb">2k</text>
<text x="714.2" y="498.8" text-anchor="middle" class="lb">5k</text>
<text x="734.1" y="498.8" text-anchor="middle" class="lb">10k</text>
<text x="754.0" y="498.8" text-anchor="middle" class="lb">20k</text>
<text x="645.5" y="507.8" text-anchor="middle" class="lb">Frequenz [Hz]</text>
</svg>
<div class="xbtn" style="left:1px;top:140px"><svg style="left:3px;top:4px" width="11" height="9" viewBox="0 0 11 9"><path d="M1.5 1L9.5 8M9.5 1L1.5 8" stroke="#000" stroke-width="1.2" fill="none"/><circle cx="2" cy="7.6" r="1" fill="#000"/></svg></div>
</div>
</body></html>
